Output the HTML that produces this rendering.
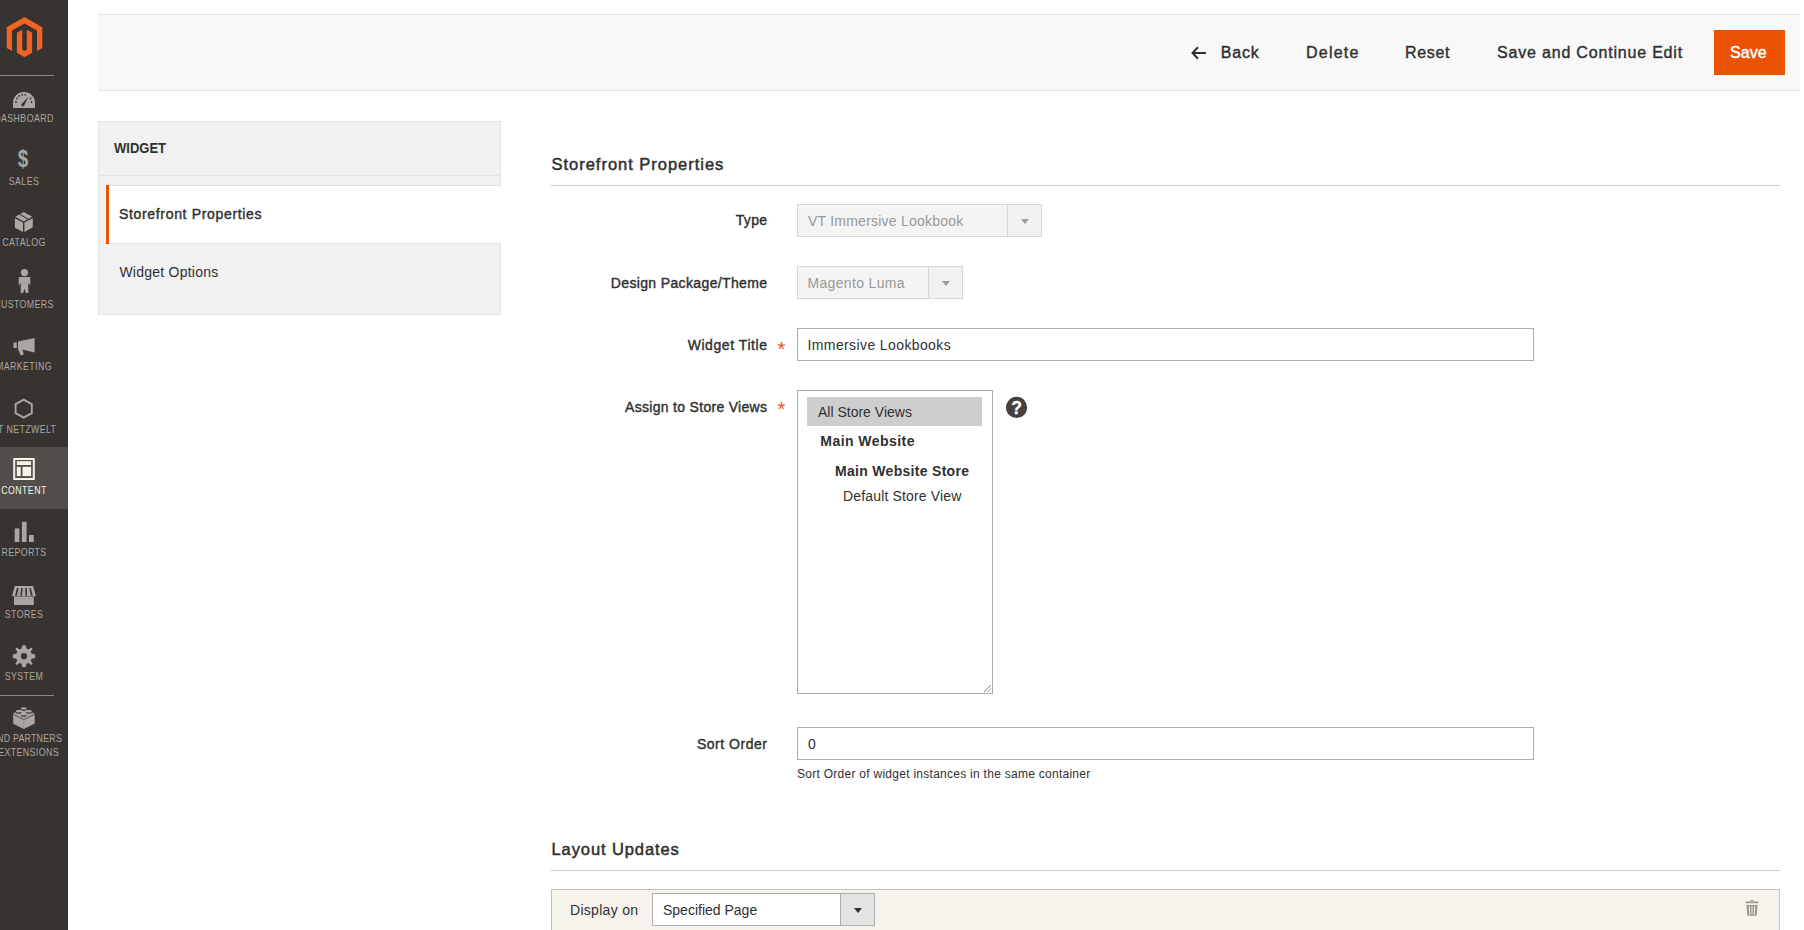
<!DOCTYPE html>
<html><head><meta charset="utf-8">
<style>
*{box-sizing:border-box;margin:0;padding:0}
html,body{width:1804px;height:930px;overflow:hidden;background:#fff;font-family:"Liberation Sans",sans-serif;color:#303030}
.a{position:absolute;white-space:nowrap;line-height:1}
#side{position:absolute;left:0;top:0;width:68px;height:930px;background:#373330;overflow:hidden}
.mi{position:absolute;left:-20px;width:88px;height:62px;text-align:center}
.mi .lbl{position:absolute;left:-20px;width:88px;text-align:center;font-size:11px;line-height:1;color:#aaa6a0;transform:scaleX(.8);letter-spacing:.5px;white-space:nowrap}
.mi svg{position:absolute}
.sep{position:absolute;left:0;width:54px;height:1px;background:#736963}
#hdr{position:absolute;left:98px;top:14px;width:1702px;height:77px;background:#f8f8f8;border-top:1px solid #e3e3e3;border-bottom:1px solid #e3e3e3}
.btn{font-size:16px;font-weight:400;-webkit-text-stroke-width:.4px;color:#303030}
.sb{font-weight:400;-webkit-text-stroke-width:.4px}
#nav{position:absolute;left:98px;top:121px;width:403px;height:194px;background:#f1f1f1;border:1px solid #e3e3e3}
.lab{font-size:14px;font-weight:400;-webkit-text-stroke-width:.4px;color:#303030;text-align:right}
.inp{position:absolute;border:1px solid #adadad;background:#fff}
.req{position:absolute;color:#e5532a;font-size:20px;line-height:1}
.sel-dis{position:absolute;border:1px solid #d6d6d6;background:#f4f4f4}
.sel-dis .arr{position:absolute;top:0;bottom:0;right:0;width:34px;border-left:1px solid #d6d6d6;background:#f1f1f1}
.tri{position:absolute;width:0;height:0;border-left:4px solid transparent;border-right:4px solid transparent;border-top:5px solid #a19b97}
.txt14{font-size:14px;color:#303030}

.lbl{position:absolute;left:-20px;width:88px;text-align:center;font-size:11px;line-height:1;color:#aaa6a0;transform:scaleX(.8);letter-spacing:.5px;white-space:nowrap}
</style></head><body>
<div id="side">
  <svg style="position:absolute;left:0;top:0" width="68" height="930" viewBox="0 0 68 930">
    <!-- logo -->
    <path fill="#f26322" d="M24.5,17 L42.3,27.2 L42.3,47.9 L37,50.9 L37,30.5 L24.5,23.4 L12,30.5 L12,50.9 L6.7,47.9 L6.7,27.2 Z"/>
    <path fill="#f26322" d="M16.9,32.8 L22.2,29.8 L22.2,49.6 L24.5,50.9 L26.8,49.6 L26.8,29.8 L32.1,32.8 L32.1,52.8 L24.5,57.3 L16.9,52.8 Z"/>
    <rect x="0" y="75" width="54" height="1" fill="#8d8883"/>
    <g fill="#aaa6a0">
      <!-- dashboard gauge -->
      <path d="M13,108 V102.6 A11,10.6 0 0 1 35,102.6 V108 Z"/>
      <g fill="#373330">
        <circle cx="16" cy="102" r="0.9"/><circle cx="17" cy="98.5" r="0.9"/><circle cx="19.3" cy="96" r="0.9"/>
        <circle cx="22.2" cy="94.8" r="0.9"/><circle cx="25.3" cy="94.8" r="0.9"/><circle cx="30.6" cy="98.5" r="0.9"/><circle cx="31.6" cy="102" r="0.9"/>
        <path d="M28.5,96.5 L24.6,104.6 A1.6,1.6 0 1 1 22.2,103.4 Z"/>
      </g>
      <text transform="translate(17.8,166.8) scale(.82,1.02)" font-family="Liberation Sans" font-weight="700" font-size="23">$</text>
      <!-- catalog box -->
      <path d="M15.2,216.8 L23.8,212 L32.2,216.8 L23.8,221.4 Z"/>
      <path d="M14.9,218.3 L23,222.6 L23,231.9 L14.9,227.7 Z"/>
      <path d="M24.4,222.6 L32.8,218.3 L32.8,227.3 L24.4,231.9 Z"/>
      <path d="M19.2,214.6 L20.3,214 L28.6,219 L27.5,219.6 Z" fill="#373330"/>
      <!-- customers person -->
      <circle cx="24.5" cy="272.6" r="3.6"/>
      <path d="M19.6,277 H29.4 Q30.3,277 30.3,278 L30.3,285.4 L28.3,283 L28.3,293 L25.8,293 L24.5,288.5 L23.2,293 L20.7,293 L20.7,283 L18.7,285.4 L18.7,278 Q18.7,277 19.6,277 Z"/>
      <!-- megaphone -->
      <path d="M13.6,342.6 H16.8 V348 H13.6 Q13.2,345.3 13.6,342.6 Z"/>
      <path d="M18,341.6 L34.6,337.9 L34.6,352.4 L22.5,349.4 L23.8,354.6 L20.7,355.6 L18,349.3 Z"/>
      <!-- hexagon outline -->
      <path fill="none" stroke="#aaa6a0" stroke-width="1.9" d="M23.7,399.6 L31.8,404.1 L31.8,413.1 L23.7,417.6 L15.6,413.1 L15.6,404.1 Z"/>
      <!-- reports bars -->
      <rect x="14.7" y="528.4" width="4.7" height="13.6"/>
      <rect x="21.9" y="521.8" width="4.7" height="20.2"/>
      <rect x="29" y="535" width="4.7" height="7"/>
      <!-- stores -->
      <path d="M14.7,585.9 H33.1 L35.9,596.2 H12 Z"/>
      <path d="M14,596.6 H33.8 V605 H14 Z"/>
      <g fill="#373330">
        <path d="M16.9,587.9 L18.7,587.9 L16.9,595.8 L15.1,595.8 Z"/>
        <path d="M21.2,587.9 L22.8,587.9 L21.9,595.8 L20.2,595.8 Z"/>
        <path d="M25.2,587.9 L26.8,587.9 L27.1,595.8 L25.4,595.8 Z"/>
        <path d="M29.2,587.9 L30.7,587.9 L32.8,595.8 L30.9,595.8 Z"/>
      </g>
      <rect x="14.5" y="598.6" width="19" height="0.6" fill="#8f8b86"/>
      <!-- gear -->
      <path id="gear" d="M24,645.2 L25.6,645.2 L26.4,648.6 L28.4,649.5 L31.3,647.5 L32.6,648.7 L30.8,651.6 L31.6,653.7 L35.2,654.5 L35.2,657.9 L31.6,658.7 L30.8,660.8 L32.6,663.7 L31.3,664.9 L28.4,662.9 L26.4,663.8 L25.6,667.2 L22.4,667.2 L21.6,663.8 L19.6,662.9 L16.7,664.9 L15.4,663.7 L17.2,660.8 L16.4,658.7 L12.8,657.9 L12.8,654.5 L16.4,653.7 L17.2,651.6 L15.4,648.7 L16.7,647.5 L19.6,649.5 L21.6,648.6 L22.4,645.2 Z"/>
      <circle cx="24" cy="656.2" r="3.1" fill="#373330"/>
      <rect x="0" y="695" width="54" height="1" fill="#8d8883"/>
      <!-- lego -->
      <path d="M13.2,713.6 L23.8,708 L34.6,713.8 L34.8,723.4 L23.8,729 L13.2,723.7 Z"/>
      <path d="M13.4,714.4 L23.8,719.6 L34.4,714.4" fill="none" stroke="#373330" stroke-width="0.8"/>
      <path d="M23.8,719.8 V729" fill="none" stroke="#8d8984" stroke-width="0.7"/>
      <g fill="#373330">
        <ellipse cx="23.8" cy="709.6" rx="3" ry="1.3"/>
        <ellipse cx="18.6" cy="712.5" rx="3" ry="1.3"/>
        <ellipse cx="29" cy="712.5" rx="3" ry="1.3"/>
        <ellipse cx="23.8" cy="715.5" rx="3" ry="1.3"/>
      </g>
      <ellipse cx="23.8" cy="708.4" rx="2.9" ry="1.2"/>
      <ellipse cx="18.6" cy="711.3" rx="2.9" ry="1.2"/>
      <ellipse cx="29" cy="711.3" rx="2.9" ry="1.2"/>
      <ellipse cx="23.8" cy="714.3" rx="2.9" ry="1.2"/>
    </g>
  </svg>
  <div style="position:absolute;left:0;top:447px;width:68px;height:62px;background:#524d49"></div>
  <svg style="position:absolute;left:0;top:0" width="68" height="930" viewBox="0 0 68 930">
    <g fill="#f7f3eb">
      <rect x="13.2" y="458" width="21.6" height="22"/>
      <rect x="15.2" y="460" width="17.6" height="18" fill="#524d49"/>
      <rect x="16.8" y="461.2" width="14.3" height="3.8"/>
      <rect x="16.8" y="466.8" width="3.9" height="9.3"/>
      <rect x="22.5" y="466.8" width="8.6" height="9.3"/>
    </g>
  </svg>
  <div class="lbl" style="top:113px">DASHBOARD</div>
  <div class="lbl" style="top:175.5px">SALES</div>
  <div class="lbl" style="top:237px">CATALOG</div>
  <div class="lbl" style="top:298.8px">CUSTOMERS</div>
  <div class="lbl" style="top:360.8px">MARKETING</div>
  <div class="lbl" style="top:423.5px">VT NETZWELT</div>
  <div class="lbl" style="top:485.3px;color:#f7f3eb">CONTENT</div>
  <div class="lbl" style="top:547.4px">REPORTS</div>
  <div class="lbl" style="top:609px">STORES</div>
  <div class="lbl" style="top:671.2px">SYSTEM</div>
  <div class="lbl" style="top:733.3px;letter-spacing:.3px">FIND PARTNERS</div>
  <div class="lbl" style="top:747px">&amp; EXTENSIONS</div>
</div>
<div id="hdr"></div>
<svg class="a" style="left:1190px;top:45px" width="18" height="16" viewBox="0 0 18 16">
  <path d="M2.5,8 H16 M8,2.2 L2.5,8 L8,13.8" fill="none" stroke="#303030" stroke-width="2"/>
</svg>
<div class="a btn" style="left:1220.8px;top:45.4px;letter-spacing:.83px">Back</div>
<div class="a btn" style="left:1306px;top:45.4px;letter-spacing:1.24px">Delete</div>
<div class="a btn" style="left:1405px;top:45.4px;letter-spacing:.67px">Reset</div>
<div class="a btn" style="left:1497px;top:45.4px;letter-spacing:.81px">Save and Continue Edit</div>
<div class="a" style="left:1714px;top:30px;width:71px;height:45px;background:#eb5202"></div>
<div class="a btn" style="left:1730px;top:44.5px;color:#fff;-webkit-text-stroke-color:#fff;letter-spacing:.1px">Save</div>

<div id="nav"></div>
<div class="a" style="left:99px;top:175px;width:401px;height:1px;background:#e3e3e3"></div>
<div class="a" style="left:106px;top:185px;width:3px;height:59px;background:#eb5202"></div>
<div class="a" style="left:109px;top:185px;width:392px;height:59px;background:#fff;border-top:1px solid #e3e3e3;border-bottom:1px solid #e3e3e3"></div>
<div class="a" style="left:114.2px;top:140.9px;font-size:14px;font-weight:700;transform:scaleX(.93);transform-origin:0 0;color:#303030">WIDGET</div>
<div class="a sb" style="left:119px;top:206.6px;font-size:14px;letter-spacing:.67px;color:#303030">Storefront Properties</div>
<div class="a" style="left:119.4px;top:265.3px;font-size:14px;letter-spacing:.24px;color:#303030">Widget Options</div>

<div class="a sb" style="left:551.5px;top:156.4px;font-size:16.5px;letter-spacing:.98px;-webkit-text-stroke-width:.5px;color:#303030">Storefront Properties</div>
<div class="a" style="left:551px;top:185px;width:1229px;height:1px;background:#cccccc"></div>

<div class="a lab" style="right:1036.7px;top:213.0px;letter-spacing:.3px">Type</div>
<div class="a lab" style="right:1036.6px;top:276.1px;letter-spacing:.36px">Design Package/Theme</div>
<div class="a lab" style="right:1036.4px;top:338.0px;letter-spacing:.57px">Widget Title</div>
<div class="a lab" style="right:1036.7px;top:399.7px;letter-spacing:.3px">Assign to Store Views</div>
<div class="a lab" style="right:1036.5px;top:736.7px;letter-spacing:.52px">Sort Order</div>
<div class="a req" style="left:777.4px;top:338.6px">*</div>
<div class="a req" style="left:777.4px;top:398.6px">*</div>

<div class="sel-dis" style="left:797px;top:204px;width:245px;height:33px"><div class="arr"></div><div class="tri" style="left:223px;top:13.5px"></div></div>
<div class="a txt14" style="left:808px;top:214.3px;color:#989898;letter-spacing:.23px">VT Immersive Lookbook</div>
<div class="sel-dis" style="left:797px;top:266px;width:166px;height:33px"><div class="arr"></div><div class="tri" style="left:144px;top:13.5px"></div></div>
<div class="a txt14" style="left:807.5px;top:276px;color:#989898;letter-spacing:.33px">Magento Luma</div>

<div class="inp" style="left:797px;top:328px;width:737px;height:33px"></div>
<div class="a txt14" style="left:807.5px;top:338px;letter-spacing:.39px">Immersive Lookbooks</div>

<div class="inp" style="left:797px;top:390px;width:196px;height:304px"></div>
<div class="a" style="left:807px;top:397px;width:175px;height:29px;background:#cecece"></div>
<div class="a txt14" style="left:818px;top:405.2px">All Store Views</div>
<div class="a txt14" style="left:820.3px;top:433.9px;font-weight:700;color:#303030;letter-spacing:.45px">Main Website</div>
<div class="a txt14" style="left:835px;top:464px;font-weight:700;color:#303030;letter-spacing:.3px">Main Website Store</div>
<div class="a txt14" style="left:843px;top:488.7px;letter-spacing:.16px">Default Store View</div>
<svg class="a" style="left:982px;top:683px" width="10" height="10" viewBox="0 0 10 10"><path d="M2,9 L9,2 M5.5,9 L9,5.5" stroke="#8a8a8a" stroke-width="1"/></svg>

<svg class="a" style="left:1005px;top:396px" width="23" height="23" viewBox="0 0 23 23">
  <circle cx="11.6" cy="11.4" r="10.6" fill="#46403c"/>
  <text x="11.6" y="17.9" text-anchor="middle" font-family="Liberation Sans" font-weight="700" font-size="17.5" fill="#fff" stroke="#fff" stroke-width=".3">?</text>
</svg>

<div class="inp" style="left:797px;top:727px;width:737px;height:33px"></div>
<div class="a txt14" style="left:808px;top:737px">0</div>
<div class="a" style="left:797px;top:767.8px;font-size:12px;color:#303030;letter-spacing:.27px">Sort Order of widget instances in the same container</div>

<div class="a sb" style="left:551.5px;top:841px;font-size:16.5px;color:#303030;letter-spacing:.9px;-webkit-text-stroke-width:.5px">Layout Updates</div>
<div class="a" style="left:551px;top:870px;width:1229px;height:1px;background:#cccccc"></div>

<div class="a" style="left:551px;top:889px;width:1229px;height:60px;background:#f6f2ec;border:1px solid #c4c0ba"></div>
<div class="a txt14" style="left:570px;top:903px;color:#303030;letter-spacing:.3px">Display on</div>
<div class="inp" style="left:652px;top:893px;width:223px;height:33px"><div style="position:absolute;right:0;top:0;bottom:0;width:34px;background:#e3e3e3;border-left:1px solid #adadad"></div><div class="tri" style="left:201px;top:14px;border-top-color:#303030"></div></div>
<div class="a txt14" style="left:663px;top:903px">Specified Page</div>
<svg class="a" style="left:1744px;top:899px" width="16" height="18" viewBox="0 0 16 18">
  <g fill="#9a948e"><rect x="1.5" y="2.6" width="13" height="1.6"/><rect x="6" y="1.2" width="4" height="1"/>
  <path d="M2.5,6 H13.5 L12.6,16.8 H3.4 Z"/></g>
  <g fill="#f6f2ec"><rect x="5" y="7.2" width="1" height="8.4"/><rect x="7.5" y="7.2" width="1" height="8.4"/><rect x="10" y="7.2" width="1" height="8.4"/></g>
</svg>

</body></html>
